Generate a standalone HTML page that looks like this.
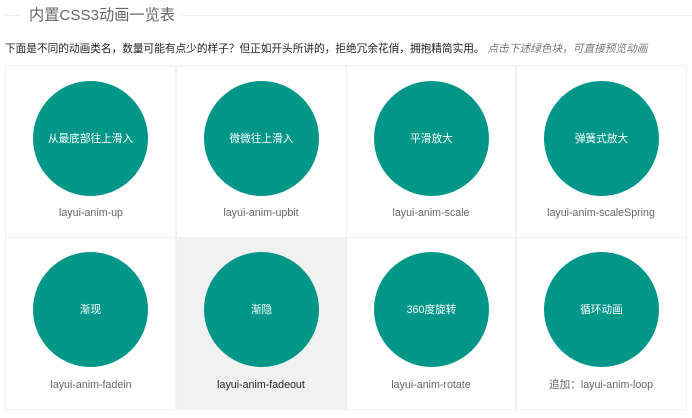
<!DOCTYPE html>
<html>
<head>
<meta charset="utf-8">
<style>
html,body{margin:0;padding:0;background:#fff;width:692px;height:418px;overflow:hidden}
body{position:relative;font-family:"Liberation Sans","Noto Sans CJK SC",sans-serif}
.a{position:absolute}
.l{background:#f0f0f0}
.t{position:absolute;left:29px;top:6px;font-size:15.2px;line-height:20px;color:#666;white-space:nowrap}
.p{position:absolute;left:5px;top:41px;font-size:10.67px;line-height:16px;color:#222;white-space:nowrap}
.p i{color:#777;margin-left:3px;font-style:italic}
.c{position:absolute;width:115px;height:115px;border-radius:50%;background:#009688;color:#fff;font-size:10.67px;line-height:117px;text-align:center;white-space:nowrap}
.n{position:absolute;width:170px;text-align:center;font-size:10.67px;line-height:16px;color:#666;white-space:nowrap}
</style>
</head>
<body>
<div class="a l" style="left:5px;top:15px;width:16px;height:1px"></div>
<div class="a l" style="left:182px;top:15px;width:510px;height:1px"></div>
<div class="t">内置CSS3动画一览表</div>
<div class="p">下面是不同的动画类名，数量可能有点少的样子？但正如开头所讲的，拒绝冗余花俏，拥抱精简实用。<i>点击下述绿色块，可直接预览动画</i></div>

<div class="a" style="left:176px;top:238px;width:171px;height:171px;background:#f1f1f1"></div>

<div class="a l" style="left:5px;top:65px;width:681px;height:1px"></div>
<div class="a l" style="left:5px;top:237px;width:681px;height:1px"></div>
<div class="a l" style="left:5px;top:409px;width:681px;height:1px"></div>
<div class="a l" style="left:5px;top:65px;width:1px;height:345px"></div>
<div class="a l" style="left:175px;top:65px;width:2px;height:345px"></div>
<div class="a l" style="left:346px;top:65px;width:1px;height:345px"></div>
<div class="a l" style="left:515px;top:65px;width:2px;height:345px"></div>
<div class="a l" style="left:686px;top:65px;width:1px;height:345px"></div>

<div class="c" style="left:33px;top:81px">从最底部往上滑入</div>
<div class="c" style="left:204px;top:81px">微微往上滑入</div>
<div class="c" style="left:374px;top:81px">平滑放大</div>
<div class="c" style="left:544px;top:81px">弹簧式放大</div>
<div class="n" style="left:6px;top:205px">layui-anim-up</div>
<div class="n" style="left:176px;top:205px">layui-anim-upbit</div>
<div class="n" style="left:346px;top:205px">layui-anim-scale</div>
<div class="n" style="left:516px;top:205px">layui-anim-scaleSpring</div>

<div class="c" style="left:33px;top:252px">渐现</div>
<div class="c" style="left:204px;top:252px">渐隐</div>
<div class="c" style="left:374px;top:252px">360度旋转</div>
<div class="c" style="left:544px;top:252px">循环动画</div>
<div class="n" style="left:6px;top:377px">layui-anim-fadein</div>
<div class="n" style="left:176px;top:377px;color:#222">layui-anim-fadeout</div>
<div class="n" style="left:346px;top:377px">layui-anim-rotate</div>
<div class="n" style="left:516px;top:377px">追加：layui-anim-loop</div>
</body>
</html>
